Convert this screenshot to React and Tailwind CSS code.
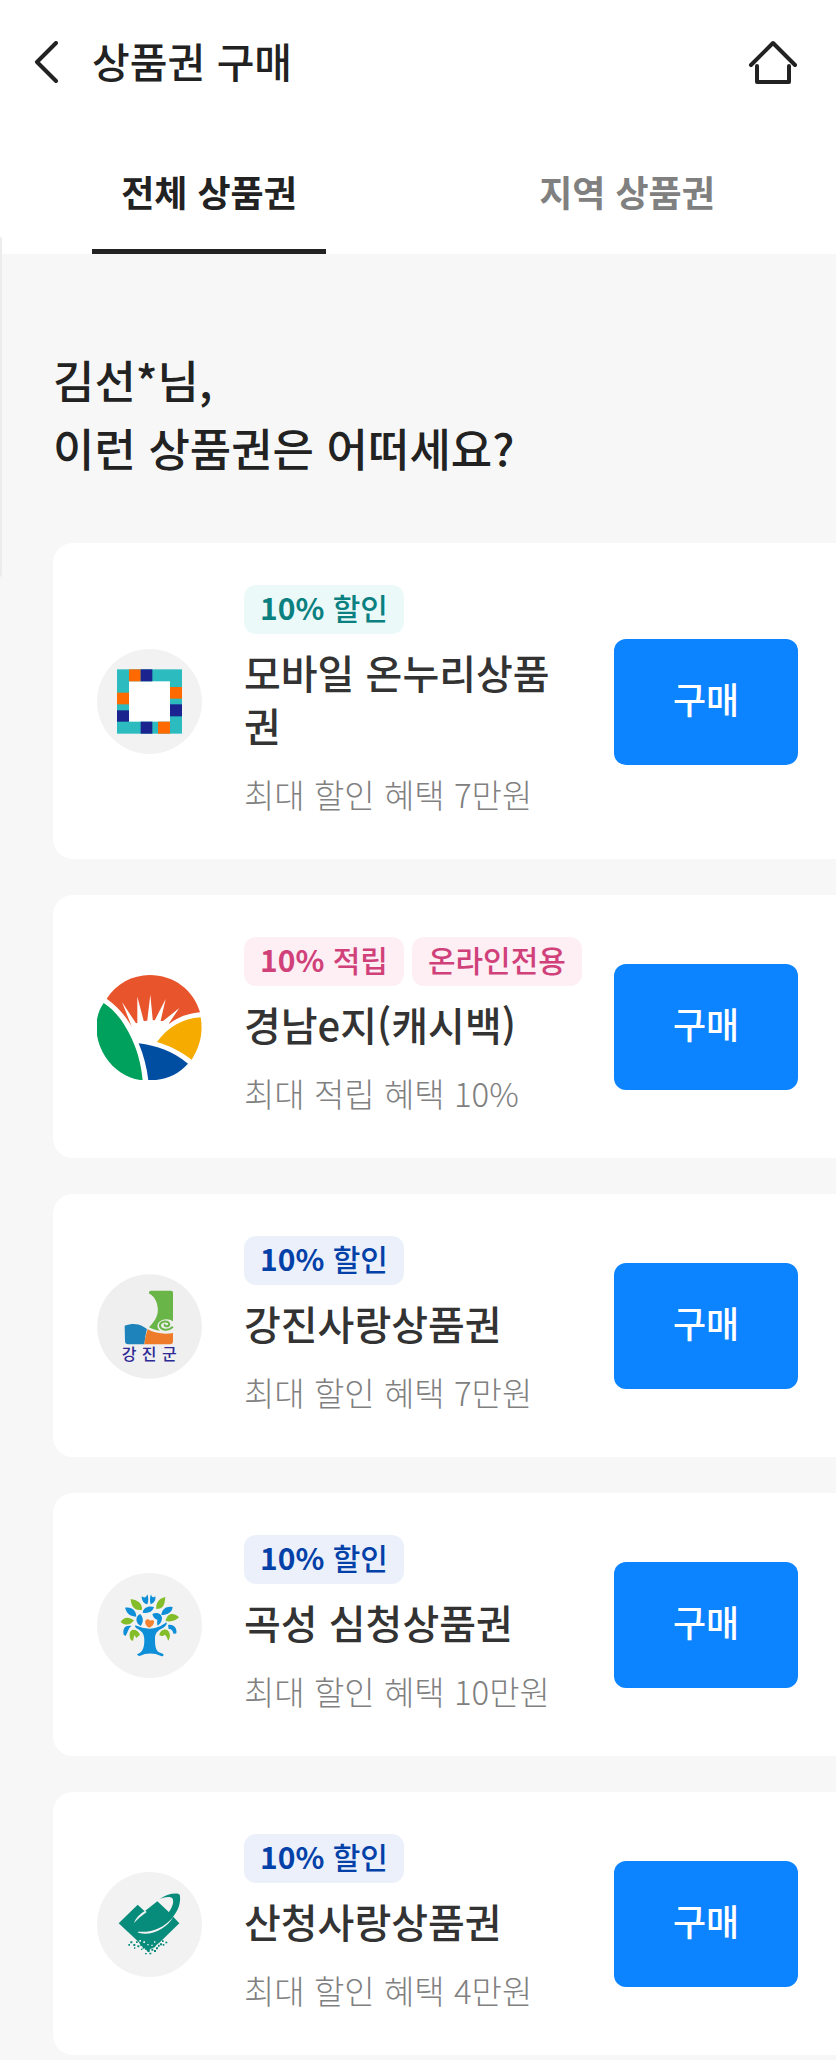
import { useState } from "react";

function OnnuriLogo() {
  return (
    <svg viewBox="51 55 315 315" className="size-[105px] shrink-0" aria-hidden="true">
      <circle cx="208.5" cy="212.5" r="157.5" fill="#f2f2f2" />
      <rect x="111" y="116" width="195" height="193" fill="#2cbcc0" />
      <rect x="147" y="152" width="123" height="121" fill="#fff" />
      <g fill="#ff6a00">
        <rect x="147" y="116" width="35" height="36" />
        <rect x="270" y="169" width="36" height="35" />
        <rect x="111" y="186" width="36" height="35" />
        <rect x="234" y="273" width="36" height="36" />
      </g>
      <g fill="#1b238e">
        <rect x="182" y="116" width="35" height="36" />
        <rect x="270" y="221" width="36" height="36" />
        <rect x="111" y="239" width="36" height="34" />
        <rect x="182" y="273" width="35" height="36" />
      </g>
    </svg>
  );
}

function GyeongnamLogo() {
  return (
    <svg viewBox="51 57 315 315" className="size-[105px] shrink-0" aria-hidden="true">
      <path
        fill="#e8552d"
        d="M80 128C108 84 157 57 209 57c71 0 132 44 151 112-34 4-64 12-92 34-40-12-80-8-113 8-22-36-45-62-75-83Z"
      />
      <path
        fill="#fff"
        d="M126 138l42 64-12 12ZM172 122l20 76-20 6ZM211 116l8 84-18 0ZM257 129l-18 78-20-4ZM298 156l-34 50-26-2ZM150 214c20-24 92-28 118-12l-36 50-60 8Z"
      />
      <path fill="#00a15c" d="M71 141C40 184 42 250 76 302c26 40 66 66 112 71-4-48-17-96-40-140-19-37-43-70-77-92Z" />
      <path fill="#004ea2" d="M176 262c54 6 106 26 148 61-30 34-72 51-119 50-4-36-14-76-29-111Z" />
      <path fill="#f5ab00" d="M362 184c8 46-2 88-27 127-32-24-66-42-104-53 32-44 76-70 131-74Z" />
    </svg>
  );
}

function GangjinLogo() {
  return (
    <svg viewBox="51 56 315 315" className="size-[105px] shrink-0" aria-hidden="true">
      <circle cx="208.5" cy="213.5" r="157" fill="#efefef" />
      <path
        fill="#6ab547"
        d="M213 106h60q6 0 6 6v86c-12-10-36-8-44 5-5 9-2 18 6 24-12-2-24-6-34-11 20-20 29-38 26-60-2-20-12-34-24-40q-6-8 4-10Z"
      />
      <path
        fill="#1f83bb"
        d="M134 211c22-8 40-6 54 2 6 4 10 6 13 8-4 14-6 30-8 46h-48q-10 0-10-10Z"
      />
      <path fill="#ee7b2a" d="M203 222c22 12 50 16 76 11v25q0 9-9 9h-77c2-16 5-31 10-45Z" />
      <path
        fill="none"
        stroke="#6ab547"
        strokeWidth="6"
        strokeLinecap="round"
        d="M277 216c-14 12-34 8-37-3-2-10 10-17 21-14 10 4 8 14-2 14q-6-1-5-5"
      />
      <text
        x="125 185 246"
        y="314"
        fontSize="48"
        fontWeight="500"
        fill="#2d2a96"
        fontFamily="'Noto Sans CJK KR', sans-serif"
      >
        강진군
      </text>
    </svg>
  );
}

function GokseongLogo() {
  return (
    <svg viewBox="51 53 315 315" className="size-[105px] shrink-0" aria-hidden="true">
      <circle cx="208.5" cy="210.5" r="157.5" fill="#f2f2f2" />
      <g fill="#0f8fd8">
        <path d="M166 210c14 6 28 10 43 10s34-6 50-19c4 6-4 14-12 18-16 8-22 16-22 32 0 20 2 34 12 40 8 4 14 4 14 9q-3 4-8 2c-20-10-44-10-64 0q-6 0-8-5c14-6 22-14 22-44 0-18-8-26-20-32q-10-5-7-11Z" />
        <path d="M202 117c4 10 4 20 0 30-12-2-17-12-17-24 8 6 14 4 17-6ZM213 117c2 8 6 12 13 6 2 12-4 20-14 24-3-10-3-20 1-30Z" />
        <path d="M135 157c20-4 34 8 34 27-16-2-28-6-34-27ZM278 155c-2 17-16 24-34 24 2-19 16-28 34-24ZM188 172c2-16 18-22 34-17-4 14-16 20-34 17Z" />
        <path d="M180 176c10 8 12 24 2 36-15-8-18-27-2-36ZM217 176c14-8 29-1 29 13 0 10-6 18-13 22-3-6-1-12-1-18-8-1-13-8-15-17Z" />
        <path d="M131 238c-4-20 6-30 24-26-10 6-10 16-18 30ZM264 209c16-4 28 8 25 25l-8 2c-2-10-8-16-15-15Z" />
      </g>
      <g fill="#84bd2a">
        <path d="M152 131c18 2 36 12 34 32-22 4-32-8-34-32ZM229 161c-2-18 8-32 27-36-2 24-6 36-27 36ZM122 200c8-14 22-18 40-5-10 15-26 17-40 5ZM257 197c4-22 22-28 40-11-10 9-22 15-40 11Z" />
        <path d="M149 240c-2-20 22-24 31-2l-11 10-6-9-4 18c-8-2-10-8-10-17ZM238 240c2-18 24-24 30-8 4 10 0 20-4 24-2-10-6-16-10-18-4 4-8 6-16 2Z" />
      </g>
      <path fill="#f58231" d="M208 217c-14-4-16-22-7-25 6 0 8 2 9 4 6-4 13-2 12 4 0 8-7 14-14 17Z" />
    </svg>
  );
}

function SancheongLogo() {
  return (
    <svg viewBox="51 50 315 315" className="size-[105px] shrink-0" aria-hidden="true">
      <circle cx="208.5" cy="207.5" r="157.5" fill="#f2f2f2" />
      <g fill="#078c7b">
        <path d="M116 204l57-56 21 20 38-30 32 30 34 36-60 58-8 6-6 8-12 4-8 10-10-12-10-6-8-12Z" />
        <path d="M240 131c14-12 36-18 54-16q6 1 6 7c2 24-6 44-22 64l-40 30-20-6c26-12 42-28 54-48 8-14 10-28 4-34-8-6-24-2-36 3Z" />
        <path d="M151 258h6v6h-6ZM145 266h5v5h-5ZM160 266h6v6h-6ZM168 258h5v5h-5ZM172 270h6v6h-6ZM181 266h6v6h-6ZM188 272h6v8h-6ZM196 278h6v6h-6ZM203 284h6v6h-6ZM195 293h5v4h-5ZM208 292h6v5h-6ZM214 280h6v6h-6ZM222 284h6v6h-6ZM228 276h6v6h-6ZM234 268h5v6h-5ZM240 264h6v6h-6ZM248 266h5v5h-5ZM256 259h6v5h-6ZM246 255h5v5h-5ZM183 280h4v4h-4ZM162 276h4v4h-4Z" />
      </g>
      <g fill="#f2f2f2">
        <path d="M196 166c-14 8-30 22-34 37 8-10 24-22 38-33Z" />
        <path d="M173 229c42 4 80-12 107-45-20 36-64 58-102 49q-6-2-5-4Z" />
        <path d="M178 254h5v5h-5ZM190 258h5v5h-5ZM202 266h4v4h-4ZM214 268h4v4h-4ZM222 258h4v4h-4Z" />
      </g>
    </svg>
  );
}

const vouchers = [
  {
    name: "모바일 온누리상품권",
    benefit: "최대 할인 혜택 7만원",
    logo: OnnuriLogo,
    badge: "bg-[#ebfaf9] text-[#0b8080]",
    kind: "할인",
  },
  {
    name: "경남e지(캐시백)",
    benefit: "최대 적립 혜택 10%",
    logo: GyeongnamLogo,
    badge: "bg-[#fdeff4] text-[#d0417a]",
    kind: "적립",
    extra: "온라인전용",
  },
  {
    name: "강진사랑상품권",
    benefit: "최대 할인 혜택 7만원",
    logo: GangjinLogo,
    badge: "bg-[#ebf0fb] text-[#0341a8]",
    kind: "할인",
  },
  {
    name: "곡성 심청상품권",
    benefit: "최대 할인 혜택 10만원",
    logo: GokseongLogo,
    badge: "bg-[#ebf0fb] text-[#0341a8]",
    kind: "할인",
  },
  {
    name: "산청사랑상품권",
    benefit: "최대 할인 혜택 4만원",
    logo: SancheongLogo,
    badge: "bg-[#ebf0fb] text-[#0341a8]",
    kind: "할인",
  },
];

function VoucherCard({ voucher }) {
  const Logo = voucher.logo;
  return (
    <li className="flex items-center rounded-l-[20px] bg-white pt-[42px] pr-[38px] pb-[41px] pl-[44px]">
      <Logo />
      <div className="ml-[42px] min-w-0 flex-1 self-start">
        <div className="flex gap-2 text-[30px] leading-[45px] font-medium whitespace-nowrap">
          <span className={`rounded-xl px-4 pb-1 ${voucher.badge}`}>
            <b className="font-bold">10%</b> {voucher.kind}
          </span>
          {voucher.extra && (
            <span className={`rounded-xl px-4 pb-1 ${voucher.badge}`}>{voucher.extra}</span>
          )}
        </div>
        <h2 className="mt-3 text-[40px] leading-[53px] font-medium text-[#333]">{voucher.name}</h2>
        <p className="mt-[18px] text-[33px] leading-[48px] font-light text-[#808080]">
          {voucher.benefit}
        </p>
      </div>
      <button className="ml-8 h-[126px] w-[184px] shrink-0 rounded-xl bg-[#0c83ff] pb-2 text-[36px] font-medium text-white">
        구매
      </button>
    </li>
  );
}

export default function App() {
  const [tab, setTab] = useState("전체 상품권");

  return (
    <div
      lang="ko"
      className="relative min-h-screen bg-[#f7f7f7] pb-1 font-['Noto_Sans_CJK_KR',sans-serif] text-[#222]"
    >
      <header className="bg-white">
        <div className="flex h-[124px] items-center pr-[38px] pl-[34px]">
          <button aria-label="뒤로">
            <svg viewBox="0 0 24 42" className="h-[42px] w-6" fill="none" stroke="#222" strokeWidth="4">
              <path d="M22 2L3 21l19 19" strokeLinejoin="round" strokeLinecap="round" />
            </svg>
          </button>
          <h1 className="ml-[34px] flex-1 pb-1 text-[41px] leading-[58px] font-medium">상품권 구매</h1>
          <button aria-label="홈">
            <svg viewBox="0 0 50 46" className="h-[46px] w-[50px]" fill="none" stroke="#222" strokeWidth="4">
              <path d="M3 26L25 4l22 22M9 27v16h32V27" strokeLinejoin="round" strokeLinecap="round" />
            </svg>
          </button>
        </div>
        <nav className="flex">
          {["전체 상품권", "지역 상품권"].map((name) => (
            <button
              key={name}
              onClick={() => setTab(name)}
              className={`flex flex-1 flex-col items-center pt-[41px] text-[36px] leading-[52px] font-bold ${
                tab === name ? "text-[#222]" : "text-[#808080]"
              }`}
            >
              {name}
              <span className={`mt-8 h-[5px] w-[234px] ${tab === name ? "bg-[#222]" : "bg-white"}`} />
            </button>
          ))}
        </nav>
      </header>

      {/* edge handle */}
      <div className="absolute top-[237px] left-0 h-[340px] w-[2px] rounded-r bg-[#ececec]" />

      <main className="pt-[92px] pl-[53px]">
        <p className="text-[45px] leading-[68px] font-medium">
          김선*님,
          <br />
          이런 상품권은 어떠세요?
        </p>
        <ul className="mt-[61px] space-y-9">
          {vouchers.map((voucher) => (
            <VoucherCard key={voucher.name} voucher={voucher} />
          ))}
        </ul>
      </main>
    </div>
  );
}
